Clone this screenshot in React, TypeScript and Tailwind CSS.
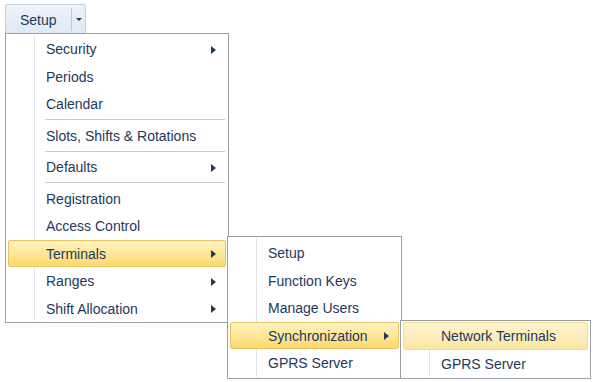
import React from 'react';

type Item = {
  label: string;
  sub?: boolean;
  active?: 'strong' | 'soft';
};

type Entry = Item | 'sep';

const mainItems: Entry[] = [
  { label: 'Security', sub: true },
  { label: 'Periods' },
  { label: 'Calendar' },
  'sep',
  { label: 'Slots, Shifts & Rotations' },
  'sep',
  { label: 'Defaults', sub: true },
  'sep',
  { label: 'Registration' },
  { label: 'Access Control' },
  { label: 'Terminals', sub: true, active: 'strong' },
  { label: 'Ranges', sub: true },
  { label: 'Shift Allocation', sub: true },
];

const terminalItems: Entry[] = [
  { label: 'Setup' },
  { label: 'Function Keys' },
  { label: 'Manage Users' },
  { label: 'Synchronization', sub: true, active: 'strong' },
  { label: 'GPRS Server' },
];

const syncItems: Entry[] = [
  { label: 'Network Terminals', active: 'soft' },
  { label: 'GPRS Server' },
];

function Arrow() {
  return (
    <span className="ml-auto mr-[9px] h-0 w-0 border-y-[4px] border-l-[5px] border-y-transparent border-l-[#1e395b]" />
  );
}

function MenuRow({ item }: { item: Item }) {
  const base = 'relative flex h-[27.5px] items-center rounded-[2px] border pt-[2px] pl-[37px]';
  const look =
    item.active === 'strong'
      ? 'border-[#e5c365] bg-gradient-to-b from-[#fef2bf] to-[#fbd96a]'
      : item.active === 'soft'
        ? 'border-[#f3dc98] bg-gradient-to-b from-[#fdf4d0] to-[#fbe7a2]'
        : 'border-transparent';
  return (
    <div className={`${base} ${look}`}>
      <span>{item.label}</span>
      {item.sub && <Arrow />}
    </div>
  );
}

function Menu({ items, className }: { items: Entry[]; className: string }) {
  return (
    <div className={`absolute border border-[#9aa0a8] bg-white px-[2px] ${className}`}>
      {/* gutter */}
      <div className="absolute top-[1px] bottom-[1px] left-[28px] w-px bg-[#e2e4e7]" />
      <div className="relative flex flex-col">
        {items.map((it, i) =>
          it === 'sep' ? (
            <div key={i} className="flex h-[4px] items-center pl-[37px] pr-[1px]">
              <div className="h-px w-full bg-[#c5d0dd]" />
            </div>
          ) : (
            <MenuRow key={i} item={it} />
          )
        )}
      </div>
    </div>
  );
}

export default function App() {
  return (
    <div
      className="relative h-[382px] w-[593px] overflow-hidden bg-white text-[14px] text-[#1e395b]"
      style={{ fontFamily: '"Liberation Sans", Arial, sans-serif' }}
    >
      {/* Setup split button */}
      <div className="absolute top-[4px] left-[5px] flex h-[30px] w-[81px] rounded-t-[2px] border border-b-0 border-[#c3d0de] bg-gradient-to-b from-[#edf3fb] to-[#dfe8f4]">
        <div className="flex w-[65px] items-center pl-[14px] pt-[1px]">Setup</div>
        <div className="my-[3px] w-px bg-[#f1c95a]" />
        <div className="flex flex-1 items-center justify-center">
          <span className="h-0 w-0 border-x-[3px] border-t-[3px] border-x-transparent border-t-[#1e395b]" />
        </div>
        <div className="absolute right-0 bottom-0 left-0 h-px bg-[#f5dc8f]" />
      </div>

      <Menu items={mainItems} className="top-[33px] left-[5px] w-[224px] pt-[1px]" />
      <Menu items={terminalItems} className="top-[236px] left-[227px] w-[175px] pt-[2px] pb-[1px]" />
      <Menu items={syncItems} className="top-[320px] left-[400px] w-[191px] pt-[1px] pb-[1px]" />
    </div>
  );
}
